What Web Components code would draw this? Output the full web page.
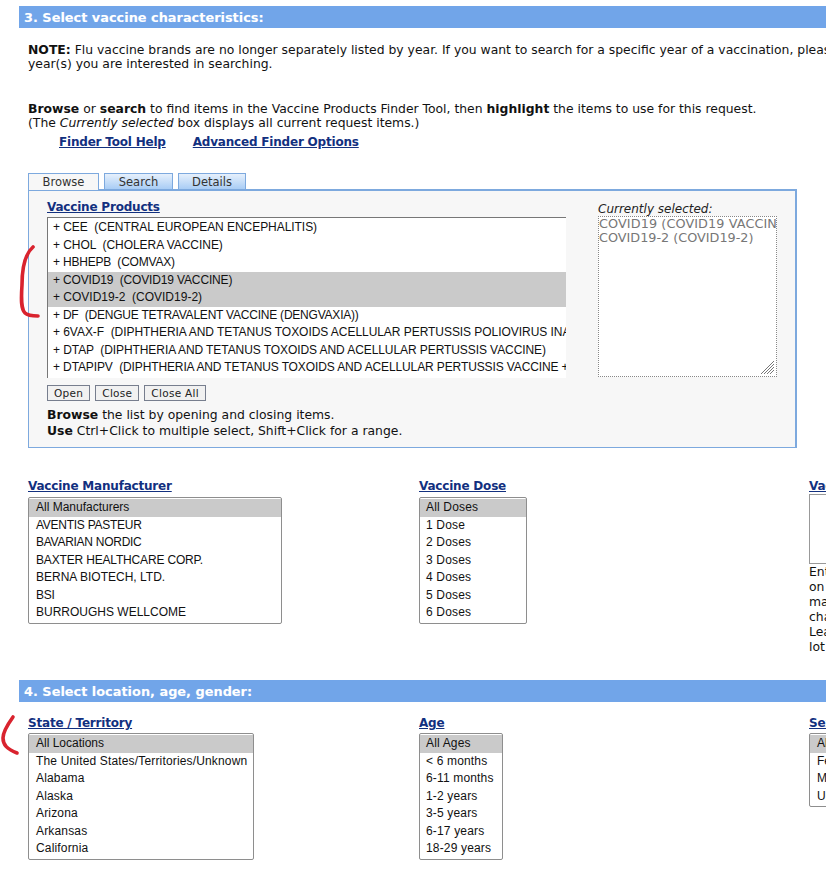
<!DOCTYPE html>
<html>
<head>
<meta charset="utf-8">
<title>Select vaccine characteristics</title>
<style>
html, body { margin: 0; padding: 0; background: #fff; overflow: hidden; height: 873px; }
body { font: 12.38px/14px "DejaVu Sans", Verdana, sans-serif; color: #111; }
.page { width: 1100px; padding: 6px 0 0 19px; }
.note { margin: 15px 0 0 9px; width: 1060px; }
.intro { margin: 31px 0 0 9px; }
.help { display: flex; gap: 27px; margin: 5px 0 0 40px; }
.three { display: grid; grid-template-columns: 391px 390px 260px; margin-left: 9px; }
.row1 { margin-top: 31px; }
.row2 { margin-top: 14px; }
finder-panel { margin: 23px 0 0 9px; }
.lot { box-sizing: border-box; height: 70px; width: 250px; border: 1px solid #999; background: #fff; }
.lotnote { width: 250px; line-height: 15px; margin-top: 1px; }
.marks { position: absolute; left: 0; top: 0; pointer-events: none; }
</style>
</head>
<body>
<template id="bar-tpl">
  <style>
    :host { display: block; }
    div { background: #71a5e9; color: #fff; font-weight: bold; font-size: 12.9px; line-height: 21px; padding: 1px 0 0 5px; text-shadow: 0 0 1px #8fb8ee; }
  </style>
  <div><slot></slot></div>
</template>

<template id="head-tpl">
  <style>
    :host { display: block; }
    a { color: #12307f; font-weight: bold; text-decoration: underline; font-size: 12px; letter-spacing: -0.2px; line-height: 15px; display: inline-block; }
  </style>
  <a href="#"><slot></slot></a>
</template>

<template id="list-tpl">
  <style>
    :host { display: block; box-sizing: border-box; border: 1px solid #8e8e8e; border-radius: 2px; background: #fff; overflow: hidden; padding: 1.4px 0 1.1px; font: 12px/17.5px "Liberation Sans", Arial, sans-serif; color: #111; }
    ::slotted(div) { padding: 0 var(--pad, 7px); white-space: pre; }
    ::slotted(.sel) { background: #cacaca; }
    ::slotted(.t) { letter-spacing: -0.27px; }
    ::slotted(.w) { letter-spacing: 0.16px; }
  </style>
  <slot></slot>
</template>

<template id="finder-tpl">
  <style>
    :host { display: block; width: 769px; }
    .tabs { display: flex; gap: 5px; height: 16px; position: relative; z-index: 1; }
    .tab { box-sizing: border-box; height: 16px; border: 1px solid #7da9de; border-bottom: 0; font-size: 11.5px; line-height: 17px; text-align: center; color: #333; background: linear-gradient(#e6f0fc, #a9cdf5); }
    .tab.on { height: 17px; background: #f7f7f7; width: 71px; }
    .panel { box-sizing: border-box; height: 259px; border: solid #7da9de; border-width: 2px 2px 1px 1px; background: #f7f7f7; padding: 9px 19px 0 18px; }
    .cols { display: flex; }
    .left { width: 519px; }
    .right { margin-left: 32px; width: 179px; }
    .tree { height: 161px; margin-top: 2px; background: #fff; border: solid #777; border-width: 1px 0 0 1px; box-sizing: border-box; overflow: hidden; font: 12px/17.5px "Liberation Sans", Arial, sans-serif; padding-top: 1px; color: #111; }
    ::slotted(div) { padding-left: 5px; white-space: pre; }
    ::slotted(.sel) { background: #cacaca; }
    .btns { display: flex; gap: 5px; margin-top: 7px; }
    .btn { box-sizing: border-box; height: 16px; border: 1px solid #777e8e; background: #f1f1f1; font-size: 10.5px; line-height: 15px; padding: 0 6px; letter-spacing: 0.3px; color: #222; }
    .tip { margin-top: 6px; line-height: 16px; }
    .label { font-style: italic; font-size: 12px; line-height: 14px; margin-top: 2px; color: #222; }
    .picked { position: relative; box-sizing: border-box; height: 161px; width: 179px; background: #fff; border: 1px dotted #888; font-size: 12.8px; line-height: 14px; color: #777; overflow: hidden; white-space: nowrap; }
    .grip { position: absolute; right: 1px; bottom: 1px; }
  </style>
  <div class="tabs">
    <div class="tab on">Browse</div>
    <div class="tab" style="width:69px">Search</div>
    <div class="tab" style="width:68px">Details</div>
  </div>
  <div class="panel">
    <div class="cols">
      <div class="left">
        <vax-head>Vaccine Products</vax-head>
        <div class="tree"><slot></slot></div>
        <div class="btns"><div class="btn">Open</div><div class="btn">Close</div><div class="btn">Close All</div></div>
      </div>
      <div class="right">
        <div class="label">Currently selected:</div>
        <div class="picked"><span style="letter-spacing:.1px">COVID19 (COVID19 VACCINE)</span><br>COVID19-2 (COVID19-2)
          <svg class="grip" width="16" height="16" viewBox="0 0 16 16"><path d="M15 2 2 15M15 5 5 15M15 8 8 15M15 11 11 15" stroke="#777" stroke-width="1" fill="none"/></svg>
        </div>
      </div>
    </div>
    <div class="tip"><b>Browse</b> the list by opening and closing items.<br><b>Use</b> Ctrl+Click to multiple select, Shift+Click for a range.</div>
  </div>
</template>

<div class="page">
  <section-bar>3. Select vaccine characteristics:</section-bar>
  <div class="note"><b>NOTE:</b> Flu vaccine brands are no longer separately listed by year. If you want to search for a specific year of a vaccination, please enter the<br>year(s) you are interested in searching.</div>
  <div class="intro"><b>Browse</b> or <b>search</b> to find items in the Vaccine Products Finder Tool, then <b>highlight</b> the items to use for this request.<br>(The <i>Currently selected</i> box displays all current request items.)</div>
  <div class="help"><vax-head>Finder Tool Help</vax-head><vax-head>Advanced Finder Options</vax-head></div>
  <finder-panel>
    <div style="letter-spacing:-.05px">+ CEE  (CENTRAL EUROPEAN ENCEPHALITIS)</div>
    <div style="letter-spacing:-.05px">+ CHOL  (CHOLERA VACCINE)</div>
    <div style="letter-spacing:-.2px">+ HBHEPB  (COMVAX)</div>
    <div class="sel" style="letter-spacing:-.15px">+ COVID19  (COVID19 VACCINE)</div>
    <div class="sel">+ COVID19-2  (COVID19-2)</div>
    <div style="letter-spacing:-.22px">+ DF  (DENGUE TETRAVALENT VACCINE (DENGVAXIA))</div>
    <div style="letter-spacing:-.05px">+ 6VAX-F  (DIPHTHERIA AND TETANUS TOXOIDS ACELLULAR PERTUSSIS POLIOVIRUS INACTIVATED)</div>
    <div style="letter-spacing:-.08px">+ DTAP  (DIPHTHERIA AND TETANUS TOXOIDS AND ACELLULAR PERTUSSIS VACCINE)</div>
    <div style="letter-spacing:-.12px">+ DTAPIPV  (DIPHTHERIA AND TETANUS TOXOIDS AND ACELLULAR PERTUSSIS VACCINE + IPV)</div>
  </finder-panel>
  <div class="three row1">
    <div>
      <vax-head>Vaccine Manufacturer</vax-head>
      <pick-list style="width:254px;margin-top:3px">
        <div class="sel">All Manufacturers</div><div class="t">AVENTIS PASTEUR</div><div class="t">BAVARIAN NORDIC</div><div style="letter-spacing:-.17px">BAXTER HEALTHCARE CORP.</div><div>BERNA BIOTECH, LTD.</div><div class="t">BSI</div><div>BURROUGHS WELLCOME</div>
      </pick-list>
    </div>
    <div>
      <vax-head>Vaccine Dose</vax-head>
      <pick-list style="width:108px;margin-top:3px;--pad:6px">
        <div class="sel w">All Doses</div><div class="w">1 Dose</div><div class="w">2 Doses</div><div class="w">3 Doses</div><div class="w">4 Doses</div><div class="w">5 Doses</div><div class="w">6 Doses</div>
      </pick-list>
    </div>
    <div>
      <vax-head>Vaccine Lot Number</vax-head>
      <div class="lot"></div>
      <div class="lotnote">Enter a lot number<br>on a separate line<br>may include wildcard<br>characters<br>Learn more about<br>lot numbers</div>
    </div>
  </div>
  <section-bar style="margin-top:25px">4. Select location, age, gender:</section-bar>
  <div class="three row2">
    <div>
      <vax-head>State / Territory</vax-head>
      <pick-list style="width:226px;margin-top:2px">
        <div class="sel">All Locations</div><div class="w">The United States/Territories/Unknown</div><div class="w">Alabama</div><div class="w">Alaska</div><div class="w">Arizona</div><div class="w">Arkansas</div><div class="w">California</div>
      </pick-list>
    </div>
    <div>
      <vax-head>Age</vax-head>
      <pick-list style="width:84px;margin-top:2px;--pad:6px">
        <div class="sel w">All Ages</div><div class="w">&lt; 6 months</div><div class="w">6-11 months</div><div class="w">1-2 years</div><div class="w">3-5 years</div><div class="w">6-17 years</div><div class="w">18-29 years</div>
      </pick-list>
    </div>
    <div>
      <vax-head>Sex</vax-head>
      <pick-list style="width:90px;margin-top:2px">
        <div class="sel">All Sexes</div><div>Female</div><div>Male</div><div>Unknown</div>
      </pick-list>
    </div>
  </div>
</div>

<svg class="marks" width="60" height="873" viewBox="0 0 60 873">
  <path d="M33 247C25 254 22 270 22 285C21 300 21 309 25 313C28 316 33 316 38 316" fill="none" stroke="#d9232e" stroke-width="3.6" stroke-linecap="round"/>
  <path d="M13 717C8 724 3 732 3 738C3 745 7 749 17 753" fill="none" stroke="#d9232e" stroke-width="3.6" stroke-linecap="round"/>
</svg>

<script>
function stamp(name, tplId) {
  customElements.define(name, class extends HTMLElement {
    connectedCallback() {
      if (this.shadowRoot) return;
      this.attachShadow({ mode: 'open' });
      this.shadowRoot.appendChild(document.getElementById(tplId).content.cloneNode(true));
    }
  });
}
stamp('section-bar', 'bar-tpl');
stamp('vax-head', 'head-tpl');
stamp('pick-list', 'list-tpl');
stamp('finder-panel', 'finder-tpl');
</script>
</body>
</html>
